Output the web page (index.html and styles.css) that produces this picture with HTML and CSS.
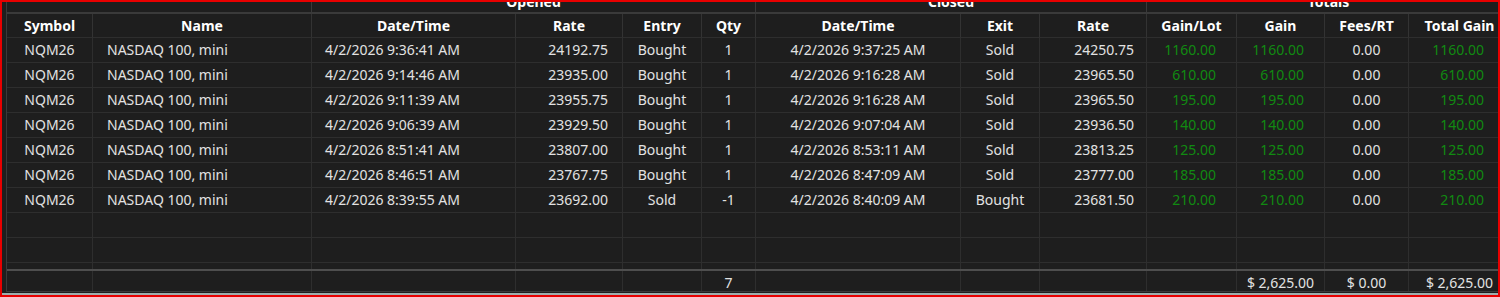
FILE: index.html
```html
<!DOCTYPE html>
<html>
<head>
<meta charset="utf-8">
<link rel="stylesheet" href="styles.css">
</head>
<body>
<div class="frame">
  <div class="grid">
    <div class="groups">
      <div class="g g-blank"></div>
      <div class="g g-open">Opened</div>
      <div class="g g-close">Closed</div>
      <div class="g g-tot">Totals</div>
    </div>
    <div class="row head">
      <div>Symbol</div><div>Name</div><div>Date/Time</div><div>Rate</div><div>Entry</div><div>Qty</div><div>Date/Time</div><div>Exit</div><div>Rate</div><div>Gain/Lot</div><div>Gain</div><div>Fees/RT</div><div>Total Gain</div>
    </div>
    <div class="body">
      <div class="row data">
        <div class="sym">NQM26</div><div class="name">NASDAQ 100, mini</div><div class="odate">4/2/2026 9:36:41 AM</div><div class="orate">24192.75</div><div class="entry">Bought</div><div class="qty">1</div><div class="cdate">4/2/2026 9:37:25 AM</div><div class="exit">Sold</div><div class="crate">24250.75</div><div class="gpl pos">1160.00</div><div class="gain pos">1160.00</div><div class="fees">0.00</div><div class="total pos">1160.00</div>
      </div>
      <div class="row data">
        <div class="sym">NQM26</div><div class="name">NASDAQ 100, mini</div><div class="odate">4/2/2026 9:14:46 AM</div><div class="orate">23935.00</div><div class="entry">Bought</div><div class="qty">1</div><div class="cdate">4/2/2026 9:16:28 AM</div><div class="exit">Sold</div><div class="crate">23965.50</div><div class="gpl pos">610.00</div><div class="gain pos">610.00</div><div class="fees">0.00</div><div class="total pos">610.00</div>
      </div>
      <div class="row data">
        <div class="sym">NQM26</div><div class="name">NASDAQ 100, mini</div><div class="odate">4/2/2026 9:11:39 AM</div><div class="orate">23955.75</div><div class="entry">Bought</div><div class="qty">1</div><div class="cdate">4/2/2026 9:16:28 AM</div><div class="exit">Sold</div><div class="crate">23965.50</div><div class="gpl pos">195.00</div><div class="gain pos">195.00</div><div class="fees">0.00</div><div class="total pos">195.00</div>
      </div>
      <div class="row data">
        <div class="sym">NQM26</div><div class="name">NASDAQ 100, mini</div><div class="odate">4/2/2026 9:06:39 AM</div><div class="orate">23929.50</div><div class="entry">Bought</div><div class="qty">1</div><div class="cdate">4/2/2026 9:07:04 AM</div><div class="exit">Sold</div><div class="crate">23936.50</div><div class="gpl pos">140.00</div><div class="gain pos">140.00</div><div class="fees">0.00</div><div class="total pos">140.00</div>
      </div>
      <div class="row data">
        <div class="sym">NQM26</div><div class="name">NASDAQ 100, mini</div><div class="odate">4/2/2026 8:51:41 AM</div><div class="orate">23807.00</div><div class="entry">Bought</div><div class="qty">1</div><div class="cdate">4/2/2026 8:53:11 AM</div><div class="exit">Sold</div><div class="crate">23813.25</div><div class="gpl pos">125.00</div><div class="gain pos">125.00</div><div class="fees">0.00</div><div class="total pos">125.00</div>
      </div>
      <div class="row data">
        <div class="sym">NQM26</div><div class="name">NASDAQ 100, mini</div><div class="odate">4/2/2026 8:46:51 AM</div><div class="orate">23767.75</div><div class="entry">Bought</div><div class="qty">1</div><div class="cdate">4/2/2026 8:47:09 AM</div><div class="exit">Sold</div><div class="crate">23777.00</div><div class="gpl pos">185.00</div><div class="gain pos">185.00</div><div class="fees">0.00</div><div class="total pos">185.00</div>
      </div>
      <div class="row data">
        <div class="sym">NQM26</div><div class="name">NASDAQ 100, mini</div><div class="odate">4/2/2026 8:39:55 AM</div><div class="orate">23692.00</div><div class="entry">Sold</div><div class="qty">-1</div><div class="cdate">4/2/2026 8:40:09 AM</div><div class="exit">Bought</div><div class="crate">23681.50</div><div class="gpl pos">210.00</div><div class="gain pos">210.00</div><div class="fees">0.00</div><div class="total pos">210.00</div>
      </div>
      <div class="row data"><div></div><div></div><div></div><div></div><div></div><div></div><div></div><div></div><div></div><div></div><div></div><div></div><div></div></div>
      <div class="row data"><div></div><div></div><div></div><div></div><div></div><div></div><div></div><div></div><div></div><div></div><div></div><div></div><div></div></div>
      <div class="row data"><div></div><div></div><div></div><div></div><div></div><div></div><div></div><div></div><div></div><div></div><div></div><div></div><div></div></div>
    </div>
    <div class="row foot">
      <div></div><div></div><div></div><div></div><div></div><div class="qty">7</div><div></div><div></div><div></div><div></div><div class="fc">$ 2,625.00</div><div class="fc">$ 0.00</div><div class="fc">$ 2,625.00</div>
    </div>
  </div>
</div>
</body>
</html>
```

FILE: styles.css
```css
html, body {
  margin: 0;
  padding: 0;
}
body {
  width: 1500px;
  height: 297px;
  background: #e80000;
  overflow: hidden;
  font-family: "Noto Sans", "Open Sans", sans-serif;
  font-size: 14px;
  color: #e2e2e2;
}
.frame {
  margin: 2px 2px 0 2px;
  height: 293px;
  box-sizing: border-box;
  background: #1e1e1e;
  border-bottom: 2px solid #9eaeae;
  padding: 0 0 1px 4px;
  overflow: hidden;
}
.grid {
  height: 290px;
  box-sizing: border-box;
  border-left: 1px solid #3a3a3a;
  border-bottom: 1px solid #3a3a3a;
  overflow: hidden;
  display: flex;
  flex-direction: column;
  width: 1505px;
}
.groups {
  display: grid;
  grid-template-columns: 305px 444px 391px 364px;
  margin-top: -12px;
  flex: none;
}
.g {
  height: 24px;
  box-sizing: border-box;
  border-right: 1px solid #3a3a3a;
  border-bottom: 2px solid #3a3a3a;
  text-align: center;
  font-weight: 700;
  color: #ffffff;
  line-height: 23px;
}
.row {
  display: grid;
  grid-template-columns: 86px 219px 204px 107px 79px 54px 205px 79px 107px 90px 88px 84px 102px;
  flex: none;
}
.row > div {
  box-sizing: border-box;
  border-right: 1px solid #2e2e2e;
  border-bottom: 1px solid #2e2e2e;
  white-space: nowrap;
  overflow: hidden;
}
.head > div {
  height: 24px;
  line-height: 23px;
  text-align: center;
  font-weight: 700;
  color: #ffffff;
  border-right-color: #333333;
}
.body {
  height: 231px;
  overflow: hidden;
  flex: none;
}
.data > div {
  height: 25px;
  line-height: 24px;
}
.sym, .entry, .qty, .cdate, .exit, .fees, .fc {
  text-align: center;
}
.name {
  padding-left: 14px;
}
.odate {
  padding-left: 13px;
}
.orate {
  text-align: right;
  padding-right: 14px;
}
.crate {
  text-align: right;
  padding-right: 12px;
}
.gpl, .gain {
  text-align: right;
  padding-right: 20px;
}
.total {
  text-align: right;
  padding-right: 26px;
}
.pos {
  color: #118a11;
}
.foot {
  border-top: 2px solid #4e4e4e;
}
.foot > div {
  height: 25px;
  line-height: 24px;
  border-bottom: none;
}
```
